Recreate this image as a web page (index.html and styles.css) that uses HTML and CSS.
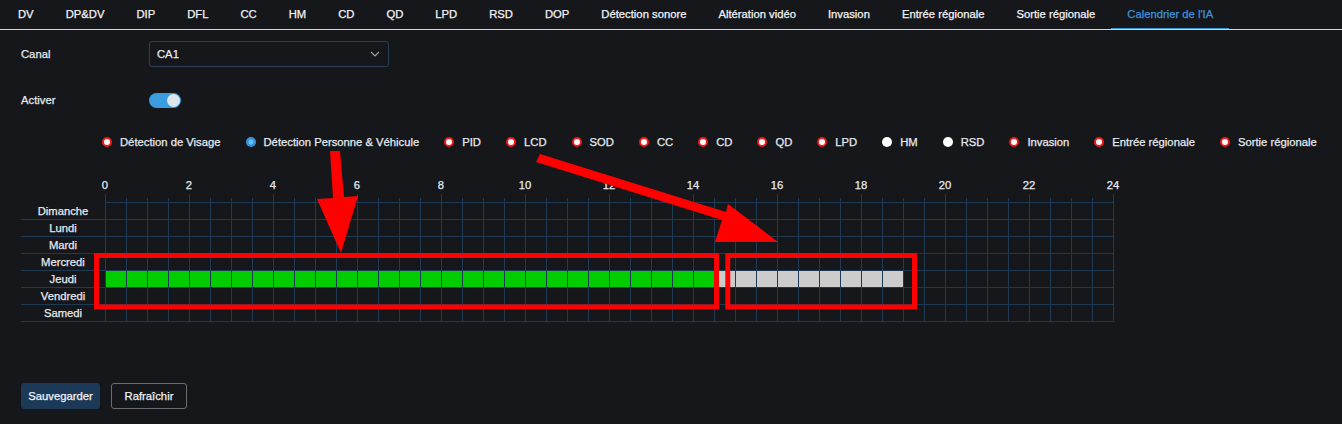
FILE: index.html
```html
<!DOCTYPE html>
<html>
<head>
    <title>Calendrier de l'IA</title>
    <link rel="stylesheet" href="styles.css">
</head>
<body>
    <div class="tabs">
        <div class="tab">DV</div>
        <div class="tab">DP&amp;DV</div>
        <div class="tab">DIP</div>
        <div class="tab">DFL</div>
        <div class="tab">CC</div>
        <div class="tab">HM</div>
        <div class="tab">CD</div>
        <div class="tab">QD</div>
        <div class="tab">LPD</div>
        <div class="tab">RSD</div>
        <div class="tab">DOP</div>
        <div class="tab">Détection sonore</div>
        <div class="tab">Altération vidéo</div>
        <div class="tab">Invasion</div>
        <div class="tab">Entrée régionale</div>
        <div class="tab">Sortie régionale</div>
        <div class="tab active">Calendrier de l'IA</div>
    </div>

    <div class="content">
        <div class="form-row">
            <label>Canal</label>
            <div class="select">
                <span>CA1</span>
                <svg width="10" height="6" viewBox="0 0 10 6"><path d="M1 1l4 4 4-4" fill="none" stroke="#9aa3ad" stroke-width="1.2"/></svg>
            </div>
        </div>
        <div class="form-row switch-row">
            <label>Activer</label>
            <div class="switch"><span class="knob"></span></div>
        </div>

        <div class="legend">
            <div class="item"><span class="dot red"></span>Détection de Visage</div>
            <div class="item"><span class="dot blue"></span>Détection Personne &amp; Véhicule</div>
            <div class="item"><span class="dot red"></span>PID</div>
            <div class="item"><span class="dot red"></span>LCD</div>
            <div class="item"><span class="dot red"></span>SOD</div>
            <div class="item"><span class="dot red"></span>CC</div>
            <div class="item"><span class="dot red"></span>CD</div>
            <div class="item"><span class="dot red"></span>QD</div>
            <div class="item"><span class="dot red"></span>LPD</div>
            <div class="item"><span class="dot white"></span>HM</div>
            <div class="item"><span class="dot white"></span>RSD</div>
            <div class="item"><span class="dot red"></span>Invasion</div>
            <div class="item"><span class="dot red"></span>Entrée régionale</div>
            <div class="item"><span class="dot red"></span>Sortie régionale</div>
        </div>

        <div class="schedule">
            <div class="hours" id="hours"></div>
            <div class="ticks"></div>
            <div id="rows"></div>
        </div>

        <div class="actions">
            <button class="btn primary">Sauvegarder</button>
            <button class="btn">Rafraîchir</button>
        </div>
    </div>

    <svg class="marks" width="1342" height="424" viewBox="0 0 1342 424">
        <rect x="96.5" y="255.5" width="620" height="51.5" fill="none" stroke="#ff0000" stroke-width="5"/>
        <rect x="727.8" y="255.5" width="186.7" height="51.5" fill="none" stroke="#ff0000" stroke-width="5"/>
        <polygon points="330,151 340,151 344,197 358,196 341,253 317,199 333,198" fill="#ff0000"/>
        <polygon points="540,154 726,212 728,204 778,242 715,242 722,220 536,162" fill="#ff0000"/>
    </svg>

    <script>
        const days = ['Dimanche', 'Lundi', 'Mardi', 'Mercredi', 'Jeudi', 'Vendredi', 'Samedi'];
        // half-hour slots set on Jeudi
        const active = { 4: { green: [0, 28], grey: [29, 37] } };

        const hours = document.getElementById('hours');
        for (let h = 0; h <= 24; h += 2) {
            const s = document.createElement('span');
            s.textContent = h;
            hours.appendChild(s);
        }

        const rows = document.getElementById('rows');
        days.forEach((day, d) => {
            const row = document.createElement('div');
            row.className = 'row';
            row.innerHTML = `<div class="day">${day}</div>`;
            const cells = document.createElement('div');
            cells.className = 'cells';
            for (let i = 0; i < 48; i++) {
                const c = document.createElement('div');
                c.className = 'cell';
                const a = active[d];
                if (a && i >= a.green[0] && i <= a.green[1]) c.classList.add('on');
                if (a && i >= a.grey[0] && i <= a.grey[1]) c.classList.add('off');
                cells.appendChild(c);
            }
            row.appendChild(cells);
            rows.appendChild(row);
        });
    </script>
</body>
</html>
```

FILE: styles.css
```css
body {
    background-color: #16171b;
    color: #e6ebf0;
    font-family: 'Liberation Sans', Arial, sans-serif;
    font-size: 11.25px;
    margin: 0;
    width: 1342px;
    height: 424px;
    overflow: hidden;
    position: relative;
    -webkit-text-stroke: 0.25px currentColor;
}
.tabs {
    display: flex;
    height: 29px;
    padding-left: 2px;
    border-bottom: 1px solid #d6d6d6;
}
.tab {
    padding: 0 16px;
    line-height: 28px;
    height: 28px;
    color: #f2f4f7;
    border-bottom: 1px solid transparent;
    white-space: nowrap;
}
.tab.active {
    color: #3b95de;
    border-bottom-color: #3b95de;
}
.content {
    padding: 11px 0 0 21px;
}
.form-row {
    display: flex;
    align-items: center;
    height: 26px;
}
.form-row label {
    width: 128px;
}
.switch-row {
    margin-top: 20px;
}
.select {
    width: 240px;
    height: 26px;
    box-sizing: border-box;
    border: 1px solid #2a3f57;
    border-radius: 3px;
    display: flex;
    align-items: center;
    justify-content: space-between;
    padding: 0 8px 0 7px;
}
.switch {
    width: 32px;
    height: 15px;
    border-radius: 8px;
    background-color: #3b9de0;
    display: flex;
    align-items: center;
    justify-content: flex-end;
    padding-right: 1px;
    box-sizing: border-box;
}
.knob {
    width: 13px;
    height: 13px;
    border-radius: 50%;
    background-color: #dfe5ec;
}
.legend {
    display: flex;
    gap: 25px;
    margin-top: 21px;
    padding-left: 81px;
    height: 16px;
    align-items: center;
    white-space: nowrap;
}
.item {
    display: flex;
    align-items: center;
    gap: 8px;
}
.dot {
    width: 10px;
    height: 10px;
    border-radius: 50%;
    box-sizing: border-box;
}
.dot.red {
    background-color: #ffffff;
    border: 2.5px solid #f01818;
}
.dot.blue {
    background: radial-gradient(circle, #6cbaf0 0 30%, #3494dc 40%);
}
.dot.white {
    background-color: #ffffff;
}
.schedule {
    margin-top: 29px;
}
.hours {
    display: flex;
    margin-left: 42px;
    height: 13px;
    line-height: 13px;
}
.hours span {
    width: 84px;
    text-align: center;
    flex: none;
}
.ticks {
    margin: 2px 0 0 84px;
    width: 1009px;
    height: 8px;
    border-bottom: 1px solid #1f3a55;
    background:
        linear-gradient(to right, #1f3a55 1px, transparent 1px) 0 0 / 84px 8px repeat-x,
        linear-gradient(to right, #1f3a55 1px, transparent 1px) 0 4px / 21px 4px repeat-x;
}
.row {
    display: flex;
    width: 1093px;
    height: 17px;
    box-sizing: border-box;
    border-bottom: 1px solid #1f3a55;
}
.day {
    width: 84px;
    text-align: center;
    line-height: 16px;
}
.cells {
    display: flex;
    border-left: 1px solid #1f3a55;
}
.cell {
    width: 21px;
    height: 16px;
    box-sizing: border-box;
    border-right: 1px solid #1f3a55;
}
.cell.on {
    background-color: #00cc00;
}
.cell.off {
    background-color: #cccccc;
}
.actions {
    display: flex;
    gap: 11px;
    margin-top: 61px;
}
.btn {
    height: 26px;
    padding: 0 5px;
    font-family: inherit;
    font-size: 11.25px;
    color: #f0f3f6;
    background: transparent;
    border: 1px solid #6b6d72;
    border-radius: 3px;
    -webkit-text-stroke: 0.25px currentColor;
}
.btn.primary {
    width: 79px;
    background-color: #1c3a57;
    border-color: #1c3a57;
}
.btn:not(.primary) {
    width: 76px;
}
.marks {
    position: absolute;
    top: 0;
    left: 0;
    pointer-events: none;
}
```
